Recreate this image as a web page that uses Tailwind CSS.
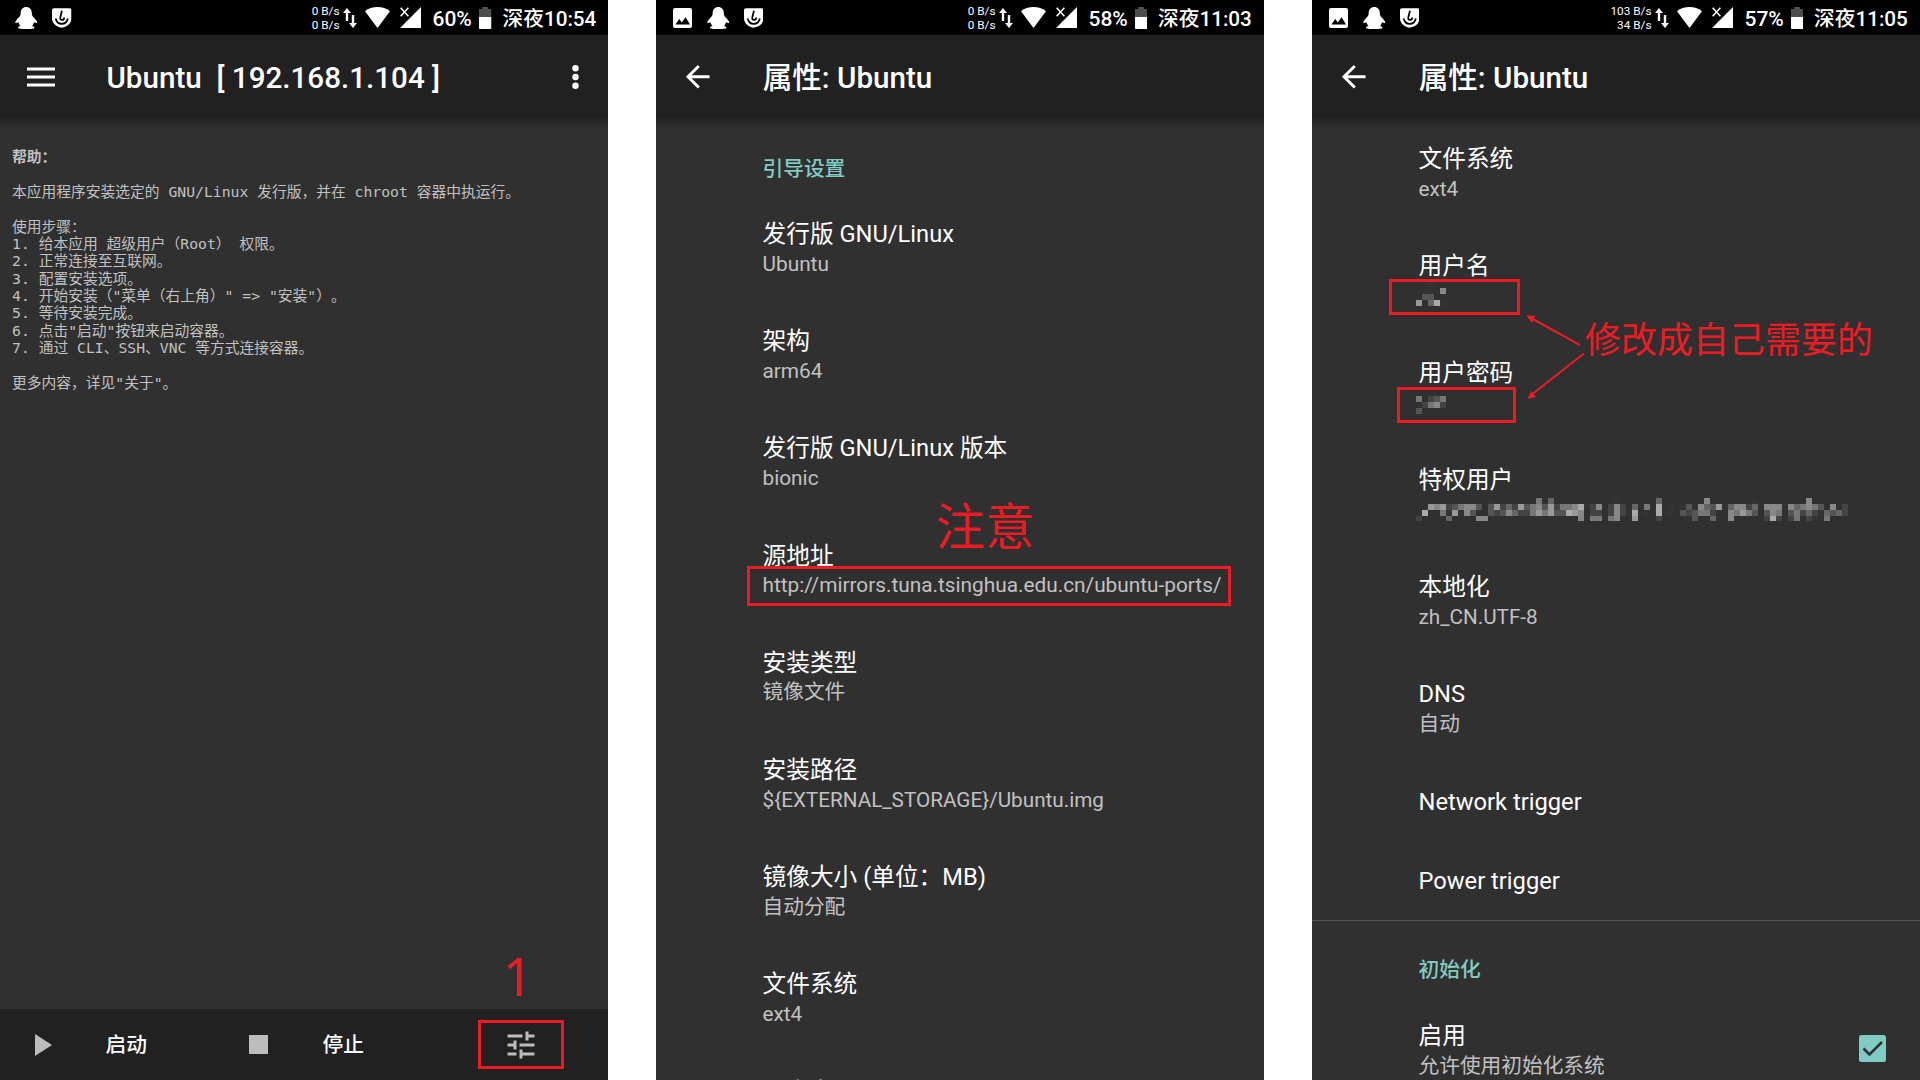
<!DOCTYPE html>
<html lang="zh-CN">
<head>
<meta charset="utf-8">
<title>Linux Deploy</title>
<script src="https://cdn.jsdelivr.net/npm/@tailwindcss/browser@4"></script>
</head>
<body class="relative w-[1920px] h-[1080px] overflow-hidden bg-white font-['Roboto','Noto_Sans_CJK_SC',sans-serif] text-white">
<svg class="hidden">
  <symbol id="qq" viewBox="0 0 22 22"><path fill="#fff" d="M11 0C7.6 0 5.4 2.6 5.4 6c0 1.300-.2 2-.8 3.200C3 11.300 0 13.500 0 15.500c0 .9 1.700.6 3.200-.2.3 1.500 1 2.700 2 3.700-1.500.3-2.400.9-2.400 1.800 0 .8 1.200 1.200 8.200 1.200s8.200-.4 8.200-1.200c0-.9-.9-1.500-2.400-1.800 1-1 1.700-2.200 2-3.700 1.500.8 3.200 1.100 3.200.2 0-2-3-4.200-4.600-6.300-.6-1.200-.8-1.900-.8-3.200C16.600 2.600 14.400 0 11 0z"/></symbol>
  <symbol id="shield" viewBox="0 0 20 20"><path fill="#fff" d="M2 0h16a2 2 0 0 1 2 2v8c0 5.500-3.700 8.600-10 10C3.700 18.600 0 15.500 0 10V2a2 2 0 0 1 2-2z"/><path fill="none" stroke="#000" stroke-width="1.800" d="M10.200 2.500 8.500 9.500c-.3 1.700.3 2.500 1.800 2.500 1.700 0 2.200-1.200 2.200-2.600M3.800 10.500c.7 3.700 2.900 5.500 6.200 5.500s5.500-1.800 6.200-5.500"/></symbol>
  <symbol id="pic" viewBox="0 0 19 20"><rect width="19" height="20" rx="2" fill="#fff"/><path d="M2.500 16.500 6.300 11l2.500 3.400 3.700-5.200 4.500 7.300z" fill="#000"/></symbol>
  <symbol id="updown" viewBox="0 0 14 20"><path fill="#fff" d="M4 0 8 5H5.200v8H2.800V5H0zM10 20l4-5h-2.800V7H8.800v8H6z"/></symbol>
  <symbol id="wifi" viewBox="0 0 25 21"><path fill="#fff" d="M12.500 21 0 4.200C3.500 1.400 7.800 0 12.500 0S21.500 1.400 25 4.200z"/></symbol>
  <symbol id="signal" viewBox="0 0 21 21"><path fill="#fff" d="M21 0v21H0l8.500-8.500L11 10z"/><path stroke="#fff" stroke-width="1.500" d="M.6.8l7.800 8.400M8.400.8.6 9.200"/></symbol>
  <symbol id="battery" viewBox="0 0 12.500 22"><path fill="#4d4d4d" d="M3.200 0h6v2h3.300v8H0V2h3.200z"/><path fill="#fff" d="M0 10h12.500v11a1 1 0 0 1-1 1H1a1 1 0 0 1-1-1z"/></symbol>
  <symbol id="back" viewBox="0 0 24 24"><path fill="#fff" d="M20 11H7.830l5.590-5.590L12 4l-8 8 8 8 1.410-1.410L7.830 13H20v-2z"/></symbol>
</svg>

<div class="flex h-full gap-12">

  <!-- Main screen -->
  <section class="flex w-[608px] h-full flex-col bg-[#303030] overflow-hidden">
    <div class="flex h-[35px] shrink-0 items-center bg-black pl-[15px] pr-[11.500px]">
      <svg class="w-[22.500px] h-[22px]"><use href="#qq"/></svg>
      <svg class="ml-[14.500px] w-[19.500px] h-5"><use href="#shield"/></svg>
      <div class="ml-auto text-right text-[11.800px] leading-[14px] whitespace-nowrap"><div>0 B/s</div><div>0 B/s</div></div>
      <svg class="ml-[3.500px] w-[14px] h-5"><use href="#updown"/></svg>
      <svg class="ml-[7.500px] w-[25px] h-[21px]"><use href="#wifi"/></svg>
      <svg class="ml-[10px] w-[21px] h-[21px]"><use href="#signal"/></svg>
      <div class="ml-[12px] w-[46.500px] pt-0.5 text-[21px] leading-6 font-medium whitespace-nowrap">60%</div>
      <svg class="w-[12.500px] h-[22px]"><use href="#battery"/></svg>
      <div class="ml-[11px] w-[94px] pt-0.5 text-[20.700px] leading-6 font-medium whitespace-nowrap">深夜10:54</div>
    </div>
    <header class="flex h-[83px] shrink-0 items-center bg-[#212121] pl-[27px] pr-[29px]">
      <svg class="w-7 h-5" viewBox="0 0 28 20"><path stroke="#fff" stroke-width="3" d="M0 2h28M0 10h28M0 18h28"/></svg>
      <h1 class="ml-[51.500px] pt-[2px] text-[29.600px] leading-9 font-medium whitespace-pre">Ubuntu  [ 192.168.1.104 ]</h1>
      <svg class="ml-auto w-[7px] h-6" viewBox="0 0 7 24"><g fill="#fff"><circle cx="3.500" cy="3.200" r="3.200"/><circle cx="3.500" cy="12" r="3.200"/><circle cx="3.500" cy="20.800" r="3.200"/></g></svg>
    </header>
    <div class="h-2.5 shrink-0 bg-linear-to-b from-[#242424] to-[#303030]"></div>
    <main class="flex-1 pl-[12px] pt-[20.400px] text-[14.750px] leading-[17.350px] whitespace-pre text-[#c1c1c1] font-['DejaVu_Sans_Mono','Noto_Sans_CJK_SC',monospace] [text-spacing-trim:space-all]"><b>帮助：</b>

本应用程序安装选定的 GNU/Linux 发行版，并在 chroot 容器中执运行。

使用步骤：
1. 给本应用 超级用户（Root） 权限。
2. 正常连接至互联网。
3. 配置安装选项。
4. 开始安装（"菜单（右上角）" =&gt; "安装"）。
5. 等待安装完成。
6. 点击"启动"按钮来启动容器。
7. 通过 CLI、SSH、VNC 等方式连接容器。

更多内容，详见"关于"。</main>
    <footer class="flex h-[71px] shrink-0 items-center bg-[#212121] pl-[35px] text-[20.700px] font-medium">
      <svg class="w-[17px] h-[22px]" viewBox="0 0 17 22"><path fill="#bdbdbd" d="M0 0l17 11L0 22z"/></svg>
      <span class="ml-[53.500px] w-[143.500px] pt-[2px]">启动</span>
      <span class="w-[18.500px] h-[18.500px] bg-[#bdbdbd]"></span>
      <span class="ml-[55px] w-[155px] pt-[2px]">停止</span>
      <span class="flex w-[86px] h-[49px] items-center justify-center border-3 border-[#ed1c24]">
        <svg class="w-[36px] h-[36px]" viewBox="0 0 24 24"><path fill="#bdbdbd" d="M3 17v2h6v-2H3zM3 5v2h10V5H3zm10 16v-2h8v-2h-8v-2h-2v6h2zM7 9v2H3v2h4v2h2V9H7zm14 4v-2H11v2h10zm-6-4h2V7h4V5h-4V3h-2v6z"/></svg>
      </span>
    </footer>
  </section>

  <!-- Properties: bootstrap -->
  <section class="w-[608px] h-full bg-[#303030] overflow-hidden">
    <div class="flex h-[35px] items-center bg-black pl-[17px] pr-[12px]">
      <svg class="w-[19px] h-5"><use href="#pic"/></svg>
      <svg class="ml-[14.500px] w-[22.500px] h-[22px]"><use href="#qq"/></svg>
      <svg class="ml-[14.500px] w-[19.500px] h-5"><use href="#shield"/></svg>
      <div class="ml-auto text-right text-[11.800px] leading-[14px] whitespace-nowrap"><div>0 B/s</div><div>0 B/s</div></div>
      <svg class="ml-[3.500px] w-[14px] h-5"><use href="#updown"/></svg>
      <svg class="ml-[7.500px] w-[25px] h-[21px]"><use href="#wifi"/></svg>
      <svg class="ml-[10px] w-[21px] h-[21px]"><use href="#signal"/></svg>
      <div class="ml-[12px] w-[46px] pt-0.5 text-[21px] leading-6 font-medium whitespace-nowrap">58%</div>
      <svg class="w-[12.500px] h-[22px]"><use href="#battery"/></svg>
      <div class="ml-[11px] w-[94px] pt-0.5 text-[20.700px] leading-6 font-medium whitespace-nowrap">深夜11:03</div>
    </div>
    <header class="flex h-[83px] items-center bg-[#212121] pl-[23.700px]">
      <svg class="w-[35.500px] h-[35.500px]"><use href="#back"/></svg>
      <h1 class="ml-[47.500px] pt-[2px] text-[29.600px] leading-9 font-medium whitespace-nowrap">属性: Ubuntu</h1>
    </header>
    <div class="h-2.5 bg-linear-to-b from-[#242424] to-[#303030]"></div>
    <div class="pl-[106.500px] whitespace-nowrap">
      <h2 class="h-[66.400px] pt-[26.500px] text-[20.700px] leading-[28px] font-medium text-[#80cbc4]">引导设置</h2>
      <div class="h-[107.140px] pt-[24.800px]"><div class="text-[23.700px] leading-[30.700px]">发行版 GNU/Linux</div><div class="text-[20.800px] leading-[28px] text-[#c1c1c1]">Ubuntu</div></div>
      <div class="h-[107.140px] pt-[24.800px]"><div class="text-[23.700px] leading-[30.700px]">架构</div><div class="text-[20.800px] leading-[28px] text-[#c1c1c1]">arm64</div></div>
      <div class="h-[107.140px] pt-[24.800px]"><div class="text-[23.700px] leading-[30.700px]">发行版 GNU/Linux 版本</div><div class="text-[20.800px] leading-[28px] text-[#c1c1c1]">bionic</div></div>
      <div class="h-[107.140px] pt-[24.800px]"><div class="text-[23.700px] leading-[30.700px]">源地址</div><div class="text-[20.800px] leading-[28px] text-[#c1c1c1]">http://mirrors.tuna.tsinghua.edu.cn/ubuntu-ports/</div></div>
      <div class="h-[107.140px] pt-[24.800px]"><div class="text-[23.700px] leading-[30.700px]">安装类型</div><div class="text-[20.700px] leading-[28px] text-[#c1c1c1]">镜像文件</div></div>
      <div class="h-[107.140px] pt-[24.800px]"><div class="text-[23.700px] leading-[30.700px]">安装路径</div><div class="text-[20.700px] leading-[28px] text-[#c1c1c1]">${EXTERNAL_STORAGE}/Ubuntu.img</div></div>
      <div class="h-[107.140px] pt-[24.800px]"><div class="text-[23.700px] leading-[30.700px]">镜像大小 (单位：MB)</div><div class="text-[20.700px] leading-[28px] text-[#c1c1c1]">自动分配</div></div>
      <div class="h-[107.140px] pt-[24.800px]"><div class="text-[23.700px] leading-[30.700px]">文件系统</div><div class="text-[20.700px] leading-[28px] text-[#c1c1c1]">ext4</div></div>
      <div class="h-[107.140px] pt-[26px]"><div class="text-[23.700px] leading-[30.700px]">用户名</div></div>
    </div>
  </section>

  <!-- Properties: user and init -->
  <section class="w-[608px] h-full bg-[#303030] overflow-hidden">
    <div class="flex h-[35px] items-center bg-black pl-[17px] pr-[12px]">
      <svg class="w-[19px] h-5"><use href="#pic"/></svg>
      <svg class="ml-[14.500px] w-[22.500px] h-[22px]"><use href="#qq"/></svg>
      <svg class="ml-[14.500px] w-[19.500px] h-5"><use href="#shield"/></svg>
      <div class="ml-auto text-right text-[11.800px] leading-[14px] whitespace-nowrap"><div>103 B/s</div><div>34 B/s</div></div>
      <svg class="ml-[3.500px] w-[14px] h-5"><use href="#updown"/></svg>
      <svg class="ml-[7.500px] w-[25px] h-[21px]"><use href="#wifi"/></svg>
      <svg class="ml-[10px] w-[21px] h-[21px]"><use href="#signal"/></svg>
      <div class="ml-[12px] w-[46px] pt-0.5 text-[21px] leading-6 font-medium whitespace-nowrap">57%</div>
      <svg class="w-[12.500px] h-[22px]"><use href="#battery"/></svg>
      <div class="ml-[11px] w-[94px] pt-0.5 text-[20.700px] leading-6 font-medium whitespace-nowrap">深夜11:05</div>
    </div>
    <header class="flex h-[83px] items-center bg-[#212121] pl-[23.700px]">
      <svg class="w-[35.500px] h-[35.500px]"><use href="#back"/></svg>
      <h1 class="ml-[47.500px] pt-[2px] text-[29.600px] leading-9 font-medium whitespace-nowrap">属性: Ubuntu</h1>
    </header>
    <div class="h-2.5 bg-linear-to-b from-[#242424] to-[#303030]"></div>
    <div class="-mt-[9px] pl-[106.500px] whitespace-nowrap">
      <div class="h-[107.140px] pt-[24.800px]"><div class="text-[23.700px] leading-[30.700px]">文件系统</div><div class="text-[20.700px] leading-[28px] text-[#c1c1c1]">ext4</div></div>
      <div class="h-[107.140px] pt-[24.800px]"><div class="text-[23.700px] leading-[30.700px]">用户名</div></div>
      <div class="h-[107.140px] pt-[24.800px]"><div class="text-[23.700px] leading-[30.700px]">用户密码</div></div>
      <div class="h-[107.140px] pt-[24.800px]"><div class="text-[23.700px] leading-[30.700px]">特权用户</div></div>
      <div class="h-[107.140px] pt-[24.800px]"><div class="text-[23.700px] leading-[30.700px]">本地化</div><div class="text-[20.700px] leading-[28px] text-[#c1c1c1]">zh_CN.UTF-8</div></div>
      <div class="h-[107.140px] pt-[24.800px]"><div class="text-[23.700px] leading-[30.700px]">DNS</div><div class="text-[20.700px] leading-[28px] text-[#c1c1c1]">自动</div></div>
      <div class="h-[79px] pt-[25.200px] text-[23.700px] leading-[31.500px]">Network trigger</div>
      <div class="h-[79px] pt-[25.200px] text-[23.700px] leading-[31.500px]">Power trigger</div>
    </div>
    <div class="h-px bg-[#545454]"></div>
    <div class="pl-[106.500px] whitespace-nowrap">
      <h2 class="h-[76px] pt-[35px] text-[20.700px] leading-[28px] font-medium text-[#80cbc4]">初始化</h2>
      <div class="flex pr-[34px]">
        <div class="flex-1 pt-[24.200px]"><div class="text-[23.700px] leading-[30.700px]">启用</div><div class="text-[20.700px] leading-[28px] text-[#c1c1c1]">允许使用初始化系统</div></div>
        <svg class="mt-[38px] w-[27px] h-[27px]" viewBox="0 0 27 27"><rect width="27" height="27" rx="2.500" fill="#80cbc4"/><path d="M4.500 13.500l6 6L23 7" fill="none" stroke="#303030" stroke-width="2.600"/></svg>
      </div>
    </div>
  </section>
</div>

<!-- Annotations drawn over the screens -->
<div class="absolute left-[503px] top-[941px] text-[52px] leading-[70px] text-[#ed1c24] font-['Noto_Sans']">1</div>
<div class="absolute left-[936px] top-[489px] text-[49.500px] leading-[70px] text-[#ed1c24] font-['Noto_Sans_CJK_SC'] whitespace-nowrap">注意</div>
<div class="absolute left-[747px] top-[566px] w-[484px] h-10 border-3 border-[#ed1c24]"></div>
<div class="absolute left-[1389px] top-[279px] w-[131px] h-9 border-3 border-[#ed1c24]"></div>
<div class="absolute left-[1397px] top-[387px] w-[119px] h-9 border-3 border-[#ed1c24]"></div>
<div class="absolute left-[1585px] top-[312px] text-[36px] leading-[50px] text-[#ed1c24] font-['Noto_Sans_CJK_SC'] whitespace-nowrap">修改成自己需要的</div>
<svg class="absolute left-[1520px] top-[308px] w-[70px] h-[98px]" viewBox="1520 308 70 98"><g fill="#ed1c24" stroke="#ed1c24"><path stroke-width="2" d="M1579.700 344.800 1530 317.500M1583.900 353.500 1530 396"/><path stroke="none" d="M1526.400 315.300l9.200.7-2.600 3.200-.8 4.300zM1527.400 399l4.200-8.200 1.500 3.700 3.600 2.200z"/></g></svg>

<svg id="mosaic" class="absolute left-[1416px] top-[282px] w-[440px] h-[242px]" shape-rendering="crispEdges"></svg>
<script>
  // Pixelated values: one hex digit per 6px cell gives its grey level
  const blocks = [
    [0, ['..3..', '.33.8', '.55..', '9.6A3']],
    [114, ['7.457', '.4784', '5....']],
    [216, [
      '............3.......7.6..........3......6.......8.......3........8......',
      '..989457885.594649578594778A348.484.6.7.A.3.3538659368846.8883867875.8.4',
      '.A..739385..5458644797955A98.44.4843A.3.A.3.545774..87975.587.5746436564',
      '4....6....88...............8.77.78..9...4.....5..6..8.....4A4.47.43.7...'
    ]]
  ];
  let out = '';
  for (const [top, rows] of blocks)
    rows.forEach((row, r) => [...row].forEach((c, i) => {
      if (c !== '.') out += `<rect x="${i * 6}" y="${top + r * 6}" width="6" height="${top === 216 && r === 3 ? 5 : 6}" fill="#${c}${c}${c}"/>`;
    }));
  document.getElementById('mosaic').innerHTML = out;
</script>
</body>
</html>
